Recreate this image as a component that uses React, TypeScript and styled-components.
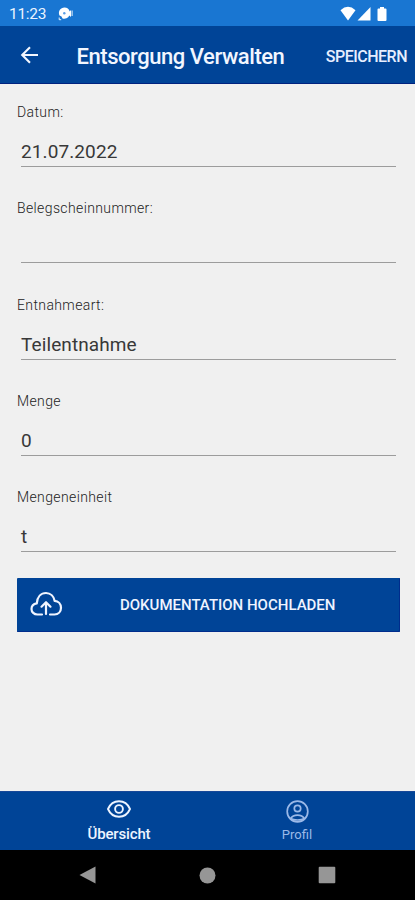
import React from "react";
import styled, { createGlobalStyle } from "styled-components";

const GlobalStyle = createGlobalStyle`
  * { box-sizing: border-box; }
  body { margin: 0; background: #f0f0f0; font-family: Roboto, sans-serif; }
  svg { display: block; flex: none; }
`;

const Screen = styled.div`
  width: 415px;
  height: 900px;
  display: flex;
  flex-direction: column;
  background: #f0f0f0;
  overflow: hidden;
`;

const StatusBar = styled.div`
  height: 26px;
  flex: none;
  display: flex;
  align-items: center;
  padding: 1px 28px 0 9px;
  background: #1976d2;
  color: #eaf4ff;
`;

const Clock = styled.span`
  width: 49px;
  padding-top: 1px;
  font-size: 15.5px;
  line-height: 20px;
  letter-spacing: -0.3px;
`;

const StatusIcons = styled.div`
  margin-left: auto;
  display: flex;
`;

const Header = styled.header`
  height: 58px;
  flex: none;
  display: flex;
  align-items: center;
  padding: 0 8px 0 20px;
  background: #004497;
  border-bottom: 1px solid #00227f;
  color: #f2f6ff;
`;

const BackButton = styled.button`
  width: 56.5px;
  padding: 0;
  border: 0;
  background: none;
  color: inherit;
`;

const Title = styled.h1`
  margin: 4px 0 0;
  font-size: 22px;
  line-height: 28px;
  font-weight: 500;
  letter-spacing: -0.45px;
  white-space: nowrap;
`;

const SaveButton = styled.button`
  margin: 4px 0 0 auto;
  padding: 0;
  border: 0;
  background: none;
  color: #e6eeff;
  font: 500 16px/20px Roboto, sans-serif;
  letter-spacing: -0.5px;
`;

const Form = styled.main`
  flex: 1;
  padding: 18px 15.5px 0 17px;
`;

const Field = styled.label`
  display: block;
  height: 96.3px;
`;

const Label = styled.span`
  display: block;
  height: 20px;
  font-size: 14px;
  line-height: 20px;
  font-weight: 300;
  letter-spacing: 0.38px;
  color: #222;
`;

const Value = styled.span`
  display: block;
  height: 45px;
  margin: 0 3.5px 0 4px;
  padding-top: 18px;
  border-bottom: 1px solid #9c9c9c;
  font-size: 19px;
  line-height: 24px;
  letter-spacing: 0.1px;
  color: #383838;
`;

const UploadButton = styled.button`
  width: 100%;
  height: 54px;
  margin-top: -5.5px;
  padding: 1px 64px 0 13px;
  display: flex;
  align-items: center;
  border: 0;
  border-radius: 1px;
  background: #004497;
  box-shadow: inset -1px -1px #002c8c;
  color: #eff4ff;
  font: 500 15px/20px Roboto, sans-serif;
`;

const UploadText = styled.span`
  margin-left: auto;
  white-space: nowrap;
`;

const Tabs = styled.nav`
  height: 59px;
  flex: none;
  display: grid;
  grid-template-columns: 178px 178px;
  padding: 0 0 0 30px;
  background: #004497;
  border-top: 1px solid #174898;
`;

const Tab = styled.div<{ $active?: boolean }>`
  display: flex;
  flex-direction: column;
  align-items: center;
  justify-content: flex-end;
  gap: ${(p) => (p.$active ? 6 : 2)}px;
  padding-bottom: ${(p) => (p.$active ? 6 : 5)}px;
  color: ${(p) => (p.$active ? "#edf4ff" : "#9bb9e8")};
  font-size: ${(p) => (p.$active ? 15 : 13)}px;
  line-height: 20px;
  font-weight: ${(p) => (p.$active ? 500 : 400)};
  letter-spacing: ${(p) => (p.$active ? -0.15 : 0)}px;
`;

const SystemBar = styled.div`
  height: 50px;
  flex: none;
  display: flex;
  justify-content: space-between;
  align-items: center;
  padding: 0 79px;
  background: #000;
`;

const Battery = () => (
  <svg width="10" height="16" viewBox="0 0 10 16" fill="#fff">
    <path d="M3 1h4v1.500h1.500q1 0 1 1v10.500q0 1-1 1h-7q-1 0-1-1V3.500q0-1 1-1H3z" />
  </svg>
);

const fields = [
  { label: "Datum:", value: "21.07.2022" },
  { label: "Belegscheinnummer:", value: "" },
  { label: "Entnahmeart:", value: "Teilentnahme" },
  { label: "Menge", value: "0" },
  { label: "Mengeneinheit", value: "t" },
];

export default function App() {
  return (
    <Screen>
      <GlobalStyle />
      <StatusBar>
        <Clock>11:23</Clock>
        <svg width="15" height="14" viewBox="0 0 15 14">
          <path d="M6.500 .5a5.500 5.500 0 0 1 5.200 4l1.300-1.500v7l-1.700-1.500a5.500 5.500 0 0 1-6.800 3L3.500 9.500 1.500 8.500A5.500 5.500 0 0 1 6.500.5z" fill="#fff" />
          <path d="M14.100 3.500v5.500M1.200 10.500v2.200h2" stroke="#fff" strokeWidth=".9" fill="none" />
          <circle cx="6.300" cy="6.200" r="1.200" fill="#5c9fe6" />
        </svg>
        <StatusIcons>
          <svg width="17" height="16" viewBox="0 0 17 16" fill="#fff"><path d="M.5 4.200Q8-2.500 15.500 4.200L8 14.500z" /></svg>
          <svg width="20" height="16" viewBox="0 0 20 16" fill="#fff"><path d="M13.500 1v13.500H.5z" /></svg>
          <Battery />
        </StatusIcons>
      </StatusBar>
      <Header>
        <BackButton aria-label="Zurück">
          <svg width="19" height="18" viewBox="0 0 19 18" fill="none" stroke="currentColor" strokeWidth="2.100">
            <path d="M18 9H2.500M10 1.200L2.200 9l7.800 7.800" />
          </svg>
        </BackButton>
        <Title>Entsorgung Verwalten</Title>
        <SaveButton>SPEICHERN</SaveButton>
      </Header>
      <Form>
        {fields.map((f) => (
          <Field key={f.label}>
            <Label>{f.label}</Label>
            <Value>{f.value}</Value>
          </Field>
        ))}
        <UploadButton>
          <svg width="33" height="28" viewBox="0 0 33 28" fill="none" stroke="currentColor" strokeWidth="2.200" strokeLinecap="round" strokeLinejoin="round">
            <path d="M12 23.500H7.500C4 23.500 1.500 21 1.500 18c0-3 2.300-5.200 5.300-5.700C7.300 6 11 2 16 2c4.500 0 7.800 3.300 8.600 7.800 3.700.2 6.400 3.100 6.400 6.900 0 4-2.700 6.800-6.500 6.800H20" />
            <path d="M16 23V12M11.500 15.700L16 11.200l4.500 4.500" />
          </svg>
          <UploadText>DOKUMENTATION HOCHLADEN</UploadText>
        </UploadButton>
      </Form>
      <Tabs>
        <Tab $active>
          <svg width="24" height="18" viewBox="0 0 24 18" fill="none" stroke="currentColor" strokeWidth="1.900">
            <path d="M1 9C5.500-1.300 18.500-1.300 23 9 18.500 19.300 5.500 19.300 1 9z" />
            <circle cx="12" cy="9" r="3.900" />
          </svg>
          <span>Übersicht</span>
        </Tab>
        <Tab>
          <svg width="23" height="23" viewBox="0 0 23 23" fill="none" stroke="currentColor" strokeWidth="1.700">
            <circle cx="11.500" cy="11.500" r="10.300" />
            <circle cx="11.500" cy="8.500" r="3.200" />
            <path d="M4.500 18.500c3-4.600 11-4.600 14 0-3.800 2-10.200 2-14 0z" />
          </svg>
          <span>Profil</span>
        </Tab>
      </Tabs>
      <SystemBar>
        <svg width="18" height="18" viewBox="0 0 18 18" fill="#969696"><path d="M.5 9L16.500 .5v17z" /></svg>
        <svg width="17" height="17" viewBox="0 0 17 17" fill="#969696"><circle cx="8.500" cy="8.500" r="8" /></svg>
        <svg width="18" height="18" viewBox="0 0 18 18" fill="#969696"><rect x=".7" y=".7" width="16.600" height="16.600" rx="1" /></svg>
      </SystemBar>
    </Screen>
  );
}
